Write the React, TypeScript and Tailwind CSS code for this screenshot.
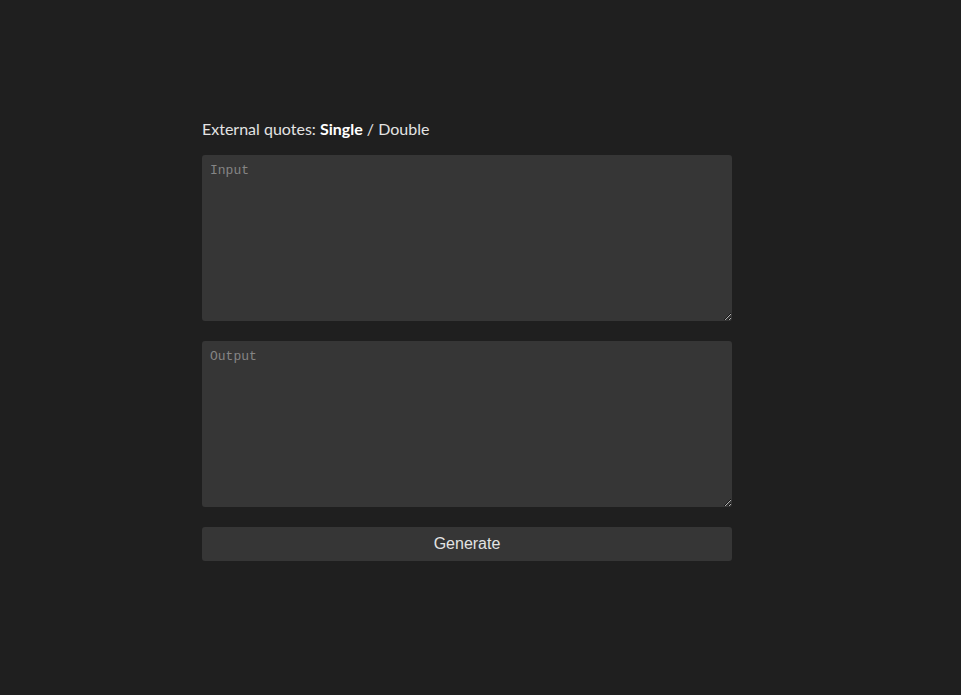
import React from "react";

export default function App() {
  return (
    <div className="min-h-[695px] w-full bg-[#1f1f1f]">
      <div className="ml-[202px] flex w-[530px] flex-col pt-[118px]">
        <div className="mb-[15px] font-['Lato','Open_Sans',sans-serif] text-[16px] leading-[22px] text-[#e3e3e3]">
          External quotes: <span className="font-bold text-white">Single</span> / <span>Double</span>
        </div>
        <div className="flex flex-col gap-[20px]">
          <textarea
            placeholder="Input"
            className="block h-[166px] w-full resize-y rounded-[3px] bg-[#363636] px-[8px] py-[6px] font-['Liberation_Mono',monospace] text-[13px] text-[#ddd] outline-none placeholder:text-[#858585]"
          />
          <textarea
            placeholder="Output"
            className="block h-[166px] w-full resize-y rounded-[3px] bg-[#363636] px-[8px] py-[6px] font-['Liberation_Mono',monospace] text-[13px] text-[#ddd] outline-none placeholder:text-[#858585]"
          />
          <button className="h-[34px] w-full rounded-[3px] bg-[#363636] font-['Liberation_Sans',Arial,sans-serif] text-[16px] text-[#e3e3e3]">
            Generate
          </button>
        </div>
      </div>
    </div>
  );
}
